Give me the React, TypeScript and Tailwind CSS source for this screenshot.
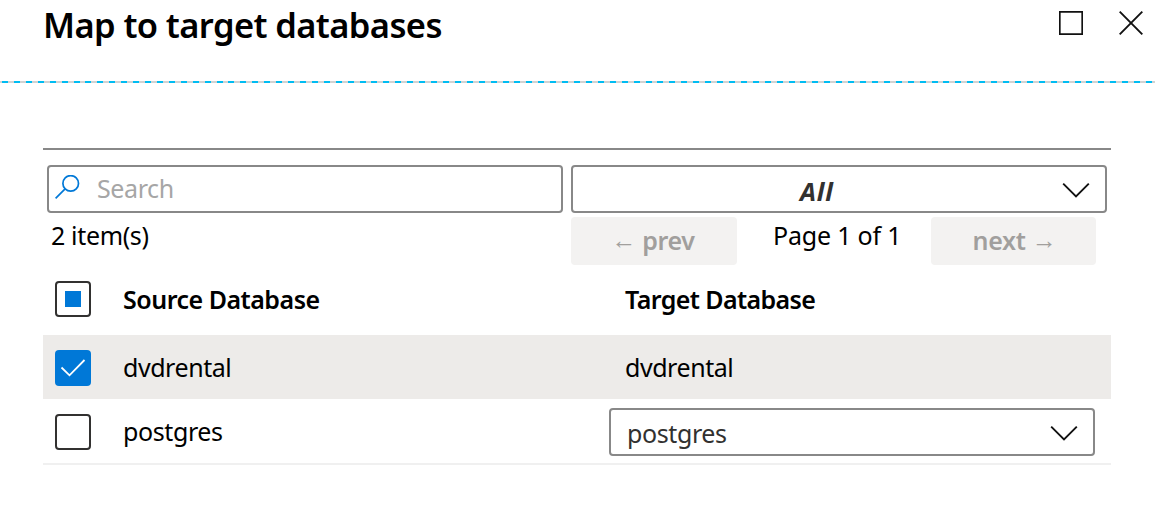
function Chevron() {
  return (
    <svg className="mt-px" width="28" height="16" viewBox="0 0 28 16" fill="none" stroke="#111" strokeWidth="1.9">
      <path d="M1.2 1.7 14 14.5 26.8 1.7" />
    </svg>
  );
}

function Checkbox({ state }: { state: "on" | "off" | "mixed" }) {
  if (state === "on") {
    return (
      <span className="mt-0.5 flex size-9 shrink-0 items-center justify-center rounded-sm bg-[#0078d7]">
        <svg width="26" height="20" viewBox="0 0 26 20" fill="none" stroke="#fff" strokeWidth="1.8">
          <path d="M1.5 9.5 9.5 17.3 24.5 2" />
        </svg>
      </span>
    );
  }
  return (
    <span className="flex size-9 shrink-0 items-center justify-center rounded-sm border-2 border-[#323130] bg-white">
      {state === "mixed" && <span className="size-4 bg-[#0078d7]" />}
    </span>
  );
}

export default function App() {
  return (
    <div className="flex h-[525px] w-[1155px] flex-col overflow-hidden bg-white font-['Noto_Sans',sans-serif] text-[25px] leading-8 whitespace-nowrap text-black">
      <header className="flex h-[81px] shrink-0 items-start pl-[43px]">
        <h1 className="h-12 flex-1 text-[34.5px] leading-[50px] font-semibold tracking-[-0.6px]">Map to target databases</h1>
        <svg className="mt-[11px] mr-9 size-6" viewBox="0 0 24 24" fill="none" stroke="#111" strokeWidth="1.7">
          <path d="M.8.8H23.2V23.2H.8Z" />
        </svg>
        <svg className="mt-[11px] mr-3 size-6" viewBox="0 0 24 24" fill="none" stroke="#111" strokeWidth="1.9">
          <path d="M.7.7 23.3 23.3M23.3.7.7 23.3" />
        </svg>
      </header>
      <div className="h-0.5 shrink-0 bg-[repeating-linear-gradient(90deg,#d2d2d2_0px,#d2d2d2_2px,#00bcf2_2px,#00bcf2_8px,#d2d2d2_8px,#d2d2d2_11.917px)]" />
      <main className="mt-[65px] mr-11 ml-[43px] flex flex-col border-t-2 border-[#888]">
        <div className="mt-[15px] flex gap-2 px-1">
          <div className="flex h-12 w-[516px] rounded-sm border-2 border-[#888]">
            <svg className="mt-2 ml-1.5 size-[26px]" viewBox="0 0 26 26" fill="none" stroke="#0078d7" strokeWidth="1.7">
              <circle cx="15.7" cy="8.4" r="7.8" />
              <path d="M10.1 13.9.6 23.4" />
            </svg>
            <span className="mt-[5px] ml-4 tracking-[-0.4px] text-[#a6a6a6]">Search</span>
          </div>
          <div className="flex h-12 w-[536px] items-center rounded-sm border-2 border-[#888] pr-[15px]">
            <span className="ml-[227px] flex-1 pt-[3px] text-[25.5px] font-bold tracking-[0.8px] text-[#323130] italic">All</span>
            <Chevron />
          </div>
        </div>
        <div className="flex h-[68px] pt-1">
          <span className="ml-2 w-[520px] pt-0.5 tracking-[-0.35px]">2 item(s)</span>
          <button className="h-12 w-[166px] rounded-sm bg-[#f3f2f1] pr-0.5 pb-0.5 font-semibold tracking-[-0.3px] text-[#a19f9d]">
            <span className="inline-block -translate-y-px">←</span> prev
          </button>
          <span className="ml-9 w-[158px] pt-0.5 tracking-[-0.2px]">Page 1 of 1</span>
          <button className="h-12 w-[165px] rounded-sm bg-[#f3f2f1] pb-0.5 pl-0.5 font-semibold tracking-[-0.3px] text-[#a19f9d]">
            next <span className="inline-block -translate-y-px">→</span>
          </button>
        </div>
        <div className="flex h-[54px] items-start pl-3">
          <Checkbox state="mixed" />
          <span className="ml-8 w-[502px] pt-0.5 font-semibold tracking-[-0.5px]">Source Database</span>
          <span className="pt-0.5 font-semibold tracking-[-0.6px]">Target Database</span>
        </div>
        <div className="flex h-16 items-center bg-[#edebe9] pl-3 tracking-[-0.45px]">
          <Checkbox state="on" />
          <span className="ml-8 w-[502px]">dvdrental</span>
          <span>dvdrental</span>
        </div>
        <div className="flex h-[66px] items-start border-b-2 border-[#f0f0f0] pl-3 tracking-[-0.4px]">
          <span className="mt-[15px] flex"><Checkbox state="off" /></span>
          <span className="mt-4 ml-8 w-[486px]">postgres</span>
          <div className="mt-[9px] flex h-12 w-[486px] items-center rounded-sm border-2 border-[#888] pr-[15px] pl-4">
            <span className="flex-1 pt-0.5 text-[#323130]">postgres</span>
            <Chevron />
          </div>
        </div>
      </main>
    </div>
  );
}
